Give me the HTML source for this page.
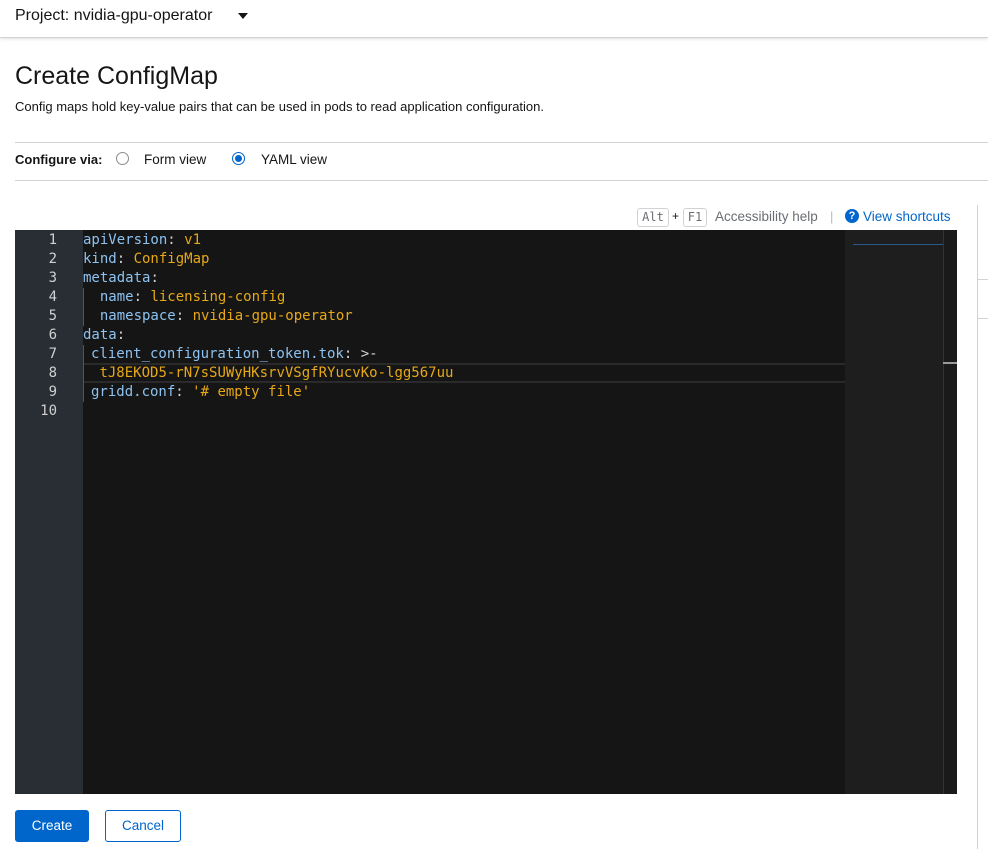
<!DOCTYPE html>
<html><head><style>
*{box-sizing:border-box;margin:0;padding:0}
body{width:988px;height:849px;overflow:hidden;background:#fff;font-family:"Liberation Sans",sans-serif;color:#151515;position:relative}
.abs{position:absolute}
.mono{font-family:"DejaVu Sans Mono","Liberation Mono",monospace;font-size:14px}
.k{color:#8dc2f0}.v{color:#e6a817}.p{color:#d4d4d4}
.ln{position:absolute;left:0;width:42px;text-align:right;color:#d0d0d0}
.cl{position:absolute;left:68px;white-space:pre}
</style></head><body>
<div class="abs" style="left:0;top:0;width:988px;height:38px;border-bottom:1px solid #d2d2d2;box-shadow:0 1px 3px rgba(0,0,0,.12)"></div>
<div class="abs" style="left:15px;top:7px;font-size:16px">Project: nvidia-gpu-operator</div>
<div class="abs" style="left:238px;top:13px;width:0;height:0;border-left:5px solid transparent;border-right:5px solid transparent;border-top:6px solid #151515"></div>
<div class="abs" style="left:15px;top:62px;font-size:25px">Create ConfigMap</div>
<div class="abs" style="left:15px;top:99px;font-size:13px;color:#151515">Config maps hold key-value pairs that can be used in pods to read application configuration.</div>
<div class="abs" style="left:15px;top:142px;width:973px;border-top:1px solid #d2d2d2"></div>
<div class="abs" style="left:15px;top:152px;font-size:13px;font-weight:bold">Configure via:</div>
<div class="abs" style="left:116px;top:152px;width:13px;height:13px;border:1px solid #8a8d90;border-radius:50%"></div>
<div class="abs" style="left:144px;top:152px;font-size:13.5px">Form view</div>
<div class="abs" style="left:232px;top:152px;width:13px;height:13px;border:1px solid #06c;border-radius:50%;background:#fff"><div style="margin:2px;width:7px;height:7px;border-radius:50%;background:#06c"></div></div>
<div class="abs" style="left:261px;top:152px;font-size:13.5px">YAML view</div>
<div class="abs" style="left:15px;top:180px;width:973px;border-top:1px solid #d2d2d2"></div>

<div class="abs mono" style="left:637px;top:208px;width:32px;height:19px;border:1px solid #d2d2d2;border-radius:3px;font-size:12px;color:#6a6e73;text-align:center;line-height:17px">Alt</div>
<div class="abs" style="left:672px;top:209px;font-size:12px">+</div>
<div class="abs mono" style="left:683px;top:208px;width:24px;height:19px;border:1px solid #d2d2d2;border-radius:3px;font-size:12px;color:#6a6e73;text-align:center;line-height:17px">F1</div>
<div class="abs" style="left:715px;top:209px;font-size:13.5px;color:#6a6e73">Accessibility help</div>
<div class="abs" style="left:830px;top:209px;font-size:13px;color:#b8bbbe">|</div>
<div class="abs" style="left:845px;top:209px;width:14px;height:14px;border-radius:50%;background:#06c;color:#fff;font-size:11px;font-weight:bold;text-align:center;line-height:14px">?</div>
<div class="abs" style="left:863px;top:209px;font-size:13.5px;color:#06c">View shortcuts</div>

<div class="abs" style="left:977px;top:205px;height:644px;border-left:1px solid #d2d2d2"></div>
<div class="abs" style="left:977px;top:279px;width:11px;border-top:1px solid #d2d2d2"></div>
<div class="abs" style="left:977px;top:318px;width:11px;border-top:1px solid #d2d2d2"></div>

<div class="abs" style="left:15px;top:230px;width:942px;height:564px;background:#151515"></div>
<div class="abs" style="left:15px;top:230px;width:68px;height:564px;background:#292e34"></div>
<div class="abs" style="left:845px;top:230px;width:98px;height:564px;background:#1e1e1e"></div>
<div class="abs" style="left:943px;top:230px;width:14px;height:564px;background:#1a1a1a;border-left:1px solid #333"></div>
<div class="abs" style="left:943px;top:362px;width:14px;height:2px;background:#999"></div>
<div class="abs" style="left:853px;top:244px;width:90px;height:1px;background:#2a5a8a"></div>
<div class="abs" style="left:84px;top:363px;width:761px;height:20px;border-top:2px solid #2a2a2a;border-bottom:2px solid #2a2a2a"></div>

<div class="abs mono" style="left:15px;top:230px;width:830px;height:564px;line-height:19px">
<div class="ln" style="top:1px">1</div><div class="cl" style="top:1px"><span class="k">apiVersion</span><span class="p">: </span><span class="v">v1</span></div>
<div class="ln" style="top:20px">2</div><div class="cl" style="top:20px"><span class="k">kind</span><span class="p">: </span><span class="v">ConfigMap</span></div>
<div class="ln" style="top:39px">3</div><div class="cl" style="top:39px"><span class="k">metadata</span><span class="p">:</span></div>
<div class="ln" style="top:58px">4</div><div class="cl" style="top:58px">  <span class="k">name</span><span class="p">: </span><span class="v">licensing-config</span></div>
<div class="ln" style="top:77px">5</div><div class="cl" style="top:77px">  <span class="k">namespace</span><span class="p">: </span><span class="v">nvidia-gpu-operator</span></div>
<div class="ln" style="top:96px">6</div><div class="cl" style="top:96px"><span class="k">data</span><span class="p">:</span></div>
<div class="ln" style="top:115px">7</div><div class="cl" style="top:115px;left:76px"><span class="k">client_configuration_token.tok</span><span class="p">: &gt;-</span></div>
<div class="ln" style="top:134px">8</div><div class="cl" style="top:134px;left:76px"> <span class="v">tJ8EKOD5-rN7sSUWyHKsrvVSgfRYucvKo-lgg567uu</span></div>
<div class="ln" style="top:153px">9</div><div class="cl" style="top:153px;left:76px"><span class="k">gridd.conf</span><span class="p">: </span><span class="v">'# empty file'</span></div>
<div class="ln" style="top:172px">10</div>
<div class="abs" style="left:68px;top:58px;width:1px;height:38px;background:#555"></div>
<div class="abs" style="left:68px;top:115px;width:1px;height:57px;background:#555"></div>
</div>

<div class="abs" style="left:15px;top:810px;width:74px;height:32px;background:#06c;border-radius:3px;color:#fff;font-size:13.5px;text-align:center;line-height:32px">Create</div>
<div class="abs" style="left:105px;top:810px;width:76px;height:32px;border:1px solid #06c;border-radius:3px;color:#06c;font-size:13.5px;text-align:center;line-height:30px">Cancel</div>
</body></html>
